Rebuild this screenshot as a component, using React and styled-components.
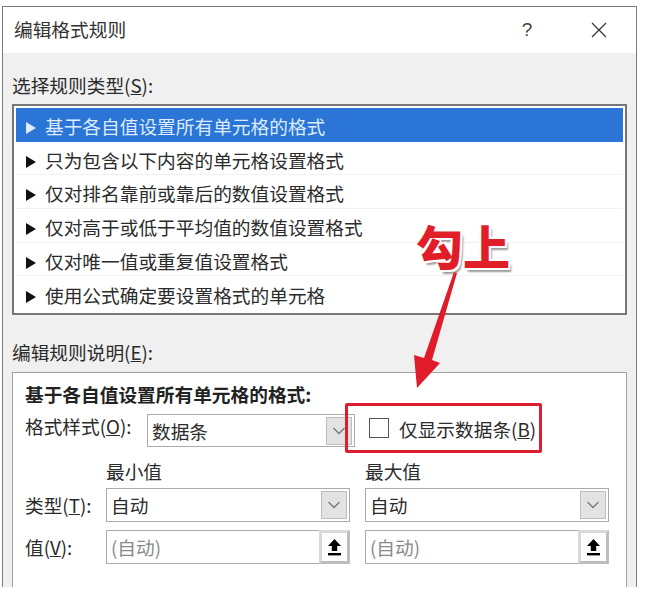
import styled, { createGlobalStyle } from "styled-components";

const GlobalStyle = createGlobalStyle`
  html, body {
    margin: 0;
    padding: 0;
    background: #fff;
  }
  body {
    font-family: "Noto Sans CJK SC", "Liberation Sans", sans-serif;
    color: #2b2b2b;
  }
`;

const Page = styled.div`
  position: relative;
  width: 656px;
  height: 589px;
  overflow: hidden;
  background: #fff;
`;

const Dialog = styled.div`
  box-sizing: border-box;
  width: 635px;
  height: 581px;
  margin: 6px 0 0 2px;
  border: 1px solid #7a7a7a;
  border-bottom: 0;
  background: #f0f0f0;
  display: flex;
  flex-direction: column;
  overflow: hidden;
  font-size: 18.7px;
  line-height: 24px;
`;

const TitleBar = styled.div`
  height: 46px;
  flex: none;
  background: #fff;
  display: flex;
  align-items: center;
  padding-left: 11px;
  .title {
    flex: 1;
    padding-bottom: 2px;
    color: #333;
  }
  .help {
    width: 20px;
    text-align: center;
    font-family: "Liberation Sans", sans-serif;
    font-size: 19px;
    color: #444;
  }
  svg {
    margin: 0 29px 0 54px;
  }
`;

const Content = styled.div`
  padding: 20px 9px 0;
`;

const Label = styled.div`
  height: 24px;
  margin-bottom: ${(p) => p.$bottom}px;
  margin-top: ${(p) => p.$top || 0}px;
  white-space: nowrap;
`;

const RuleList = styled.ul`
  box-sizing: border-box;
  list-style: none;
  margin: 0;
  width: 615px;
  height: 211px;
  padding: 2px;
  border: 2px solid #767676;
  background: #fff;
`;

const RuleItem = styled.li`
  box-sizing: border-box;
  height: 33.7px;
  display: flex;
  align-items: center;
  padding: 3px 0 0 10px;
  gap: 9px;
  white-space: nowrap;
  background: ${(p) => (p.$active ? "#2a75d6" : "#fff")};
  color: ${(p) => (p.$active ? "#dcebff" : "#2b2b2b")};
  border-bottom: 1px solid ${(p) => (p.$active ? "#2a75d6" : "#f1f1f1")};
  &:last-child {
    border-bottom: 0;
  }
`;

const Arrowhead = styled.span`
  width: 0;
  height: 0;
  margin-top: 4px;
  border-left: 10px solid ${(p) => (p.$active ? "#dcebff" : "#111")};
  border-top: 6px solid transparent;
  border-bottom: 6px solid transparent;
`;

const Group = styled.div`
  box-sizing: border-box;
  width: 615px;
  height: 230px;
  padding: 9px 12px 0;
  border: 1px solid #a0a0a0;
  background: #fff;
`;

const GroupTitle = styled.div`
  height: 24px;
  font-weight: 700;
  color: #222;
  white-space: nowrap;
`;

const StyleRow = styled.div`
  display: flex;
  align-items: center;
  margin-top: 8px;
  height: 33px;
  span.name {
    width: 122px;
    padding-bottom: 10px;
    white-space: nowrap;
  }
`;

const Field = styled.div`
  box-sizing: border-box;
  display: flex;
  align-items: center;
  justify-content: space-between;
  width: ${(p) => p.$width || "100%"};
  height: ${(p) => p.$height || 34}px;
  padding: 0 2px 0 4px;
  border: 1px solid #ababab;
  background: #fff;
  color: ${(p) => (p.$muted ? "#8a8a8a" : "#2b2b2b")};
  white-space: nowrap;
`;

const DropButton = styled.div`
  box-sizing: border-box;
  width: 26px;
  height: 28px;
  display: flex;
  align-items: center;
  justify-content: center;
  border: 1px solid #bdbdbd;
  background: #e3e3e3;
`;

const PickButton = styled.div`
  box-sizing: border-box;
  width: 31px;
  height: 34px;
  margin: -1px -3px -1px 0;
  display: flex;
  align-items: center;
  justify-content: center;
  border: 3px solid #bdbdbd;
  border-top-color: #d8d8d8;
  border-left-color: #d8d8d8;
  background: #fdfdfd;
`;

const CheckOption = styled.div`
  display: flex;
  align-items: center;
  gap: 10px;
  margin-left: 14px;
  white-space: nowrap;
  span.text {
    padding-bottom: 4px;
  }
`;

const CheckBox = styled.span`
  box-sizing: border-box;
  width: 20px;
  height: 20px;
  margin-bottom: 5px;
  border: 1.5px solid #555;
  background: #fff;
`;

const RangeHead = styled.div`
  display: grid;
  grid-template-columns: 66px 244px 244px;
  column-gap: 15px;
  margin: 13px 0 4px;
  height: 24px;
  white-space: nowrap;
  span {
    margin-top: -1px;
  }
`;

const RangeGrid = styled.div`
  display: grid;
  grid-template-columns: 66px 244px 244px;
  gap: 8px 15px;
  align-items: center;
  white-space: nowrap;
`;

const Callout = styled.div`
  position: absolute;
  left: 416px;
  top: 215px;
  font-size: 47px;
  line-height: 60px;
  font-weight: 900;
  color: #e11d2a;
  white-space: nowrap;
  text-shadow: 2px 2px 0 #fff, -2px -2px 0 #fff, 2px -2px 0 #fff, -2px 2px 0 #fff,
    3px 4px 2px #9a9a9a;
`;

const CalloutArrow = styled.svg`
  position: absolute;
  left: 405px;
  top: 265px;
`;

const HighlightBox = styled.div`
  position: absolute;
  box-sizing: border-box;
  left: 345px;
  top: 403px;
  width: 197px;
  height: 50px;
  border: 3px solid #dc1f30;
  border-radius: 2px;
`;

const rules = [
  "基于各自值设置所有单元格的格式",
  "只为包含以下内容的单元格设置格式",
  "仅对排名靠前或靠后的数值设置格式",
  "仅对高于或低于平均值的数值设置格式",
  "仅对唯一值或重复值设置格式",
  "使用公式确定要设置格式的单元格",
];

function Chevron() {
  return (
    <svg width="14" height="8" viewBox="0 0 14 8" fill="none" stroke="#777" strokeWidth="1.3">
      <path d="M1.5 1 7 6.5 12.5 1" />
    </svg>
  );
}

function PickIcon() {
  return (
    <svg width="15" height="17" viewBox="0 0 15 17" fill="#000">
      <path d="M7.5 0 14 7H10.2V12H4.8V7H1Z" />
      <rect x="1" y="14" width="13" height="2.4" />
    </svg>
  );
}

function App() {
  return (
    <Page>
      <GlobalStyle />
      <Dialog>
        <TitleBar>
          <span className="title">编辑格式规则</span>
          <span className="help">?</span>
          <svg width="16" height="16" viewBox="0 0 16 16" stroke="#333" strokeWidth="1.2">
            <path d="M1 1 15 15M15 1 1 15" />
          </svg>
        </TitleBar>
        <Content>
          <Label $bottom={7}>
            选择规则类型(<u>S</u>):
          </Label>
          <RuleList>
            {rules.map((rule, i) => (
              <RuleItem key={rule} $active={i === 0}>
                <Arrowhead $active={i === 0} />
                {rule}
              </RuleItem>
            ))}
          </RuleList>
          <Label $top={25} $bottom={8}>
            编辑规则说明(<u>E</u>):
          </Label>
          <Group>
            <GroupTitle>基于各自值设置所有单元格的格式:</GroupTitle>
            <StyleRow>
              <span className="name">
                格式样式(<u>O</u>):
              </span>
              <Field $width="208px" $height={33}>
                数据条
                <DropButton>
                  <Chevron />
                </DropButton>
              </Field>
              <CheckOption>
                <CheckBox />
                <span className="text">
                  仅显示数据条(<u>B</u>)
                </span>
              </CheckOption>
            </StyleRow>
            <RangeHead>
              <span />
              <span>最小值</span>
              <span>最大值</span>
            </RangeHead>
            <RangeGrid>
              <span>
                类型(<u>T</u>):
              </span>
              <Field>
                自动
                <DropButton>
                  <Chevron />
                </DropButton>
              </Field>
              <Field>
                自动
                <DropButton>
                  <Chevron />
                </DropButton>
              </Field>
              <span>
                值(<u>V</u>):
              </span>
              <Field $muted>
                (自动)
                <PickButton>
                  <PickIcon />
                </PickButton>
              </Field>
              <Field $muted>
                (自动)
                <PickButton>
                  <PickIcon />
                </PickButton>
              </Field>
            </RangeGrid>
          </Group>
        </Content>
      </Dialog>
      <Callout>勾上</Callout>
      <CalloutArrow width="60" height="130" viewBox="0 0 60 130">
        <path d="M49 7 52 8 27 95 35 98 12 123 9 90 19 93Z" fill="#e01b2a" />
      </CalloutArrow>
      <HighlightBox />
    </Page>
  );
}

export default App;
